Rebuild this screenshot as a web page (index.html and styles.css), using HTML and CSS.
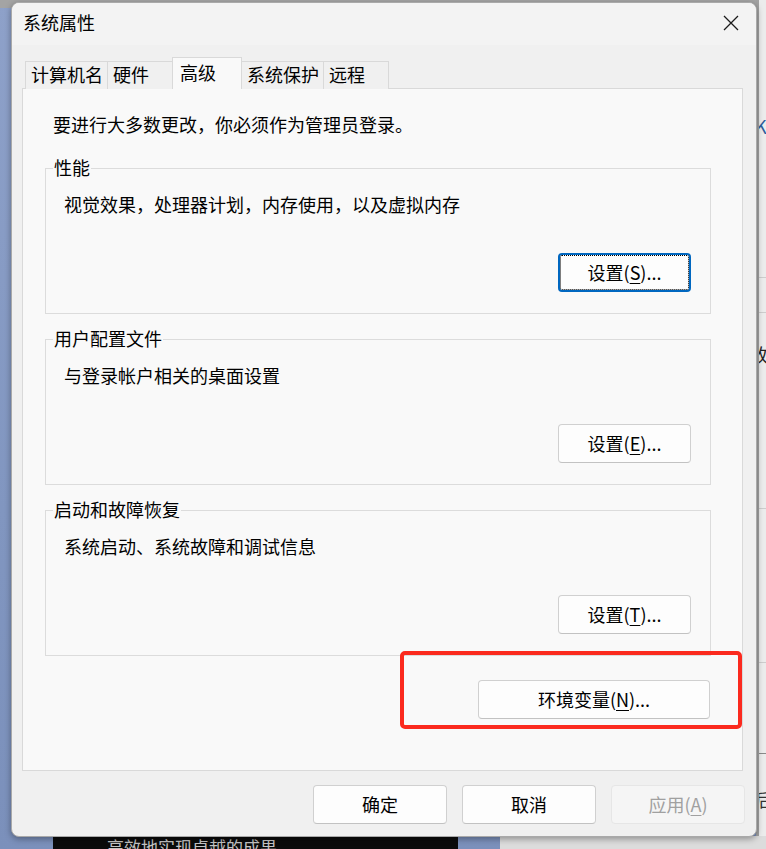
FILE: index.html
```html
<!DOCTYPE html>
<html lang="zh-CN">
<head>
<meta charset="utf-8">
<title>系统属性</title>
<link rel="stylesheet" href="styles.css">
</head>
<body>
<div class="desktop">
  <div class="bg-top"></div>
  <div class="bg-right">
    <span class="frag frag-k">K</span>
    <span class="frag frag-a">改</span>
    <span class="frag frag-b">后</span>
    <i class="hline l1"></i><i class="hline l2"></i><i class="hline l3"></i><i class="hline l4"></i><i class="hline l5"></i>
  </div>
  <div class="bg-bottom-black"><span>高效地实现卓越的成果。</span></div>
  <div class="bg-bottom-grey"></div>

  <div class="dialog">
    <div class="titlebar">
      <span class="title">系统属性</span>
      <span class="close">
        <svg width="16" height="16" viewBox="0 0 16 16"><path d="M1 1 L15 15 M15 1 L1 15" stroke="#1b1b1b" stroke-width="1.3" fill="none"/></svg>
      </span>
    </div>
    <div class="dlg-body">
      <div class="tabs">
        <div class="tab">计算机名</div>
        <div class="tab">硬件</div>
        <div class="tab active">高级</div>
        <div class="tab">系统保护</div>
        <div class="tab">远程</div>
      </div>
      <div class="panel">
        <p class="intro">要进行大多数更改，你必须作为管理员登录。</p>
        <div class="group">
          <div class="group-title">性能</div>
          <p class="group-desc">视觉效果，处理器计划，内存使用，以及虚拟内存</p>
          <div class="group-actions"><button class="btn btn-set focused">设置(<u>S</u>)...</button></div>
        </div>
        <div class="group">
          <div class="group-title">用户配置文件</div>
          <p class="group-desc">与登录帐户相关的桌面设置</p>
          <div class="group-actions"><button class="btn btn-set">设置(<u>E</u>)...</button></div>
        </div>
        <div class="group">
          <div class="group-title">启动和故障恢复</div>
          <p class="group-desc">系统启动、系统故障和调试信息</p>
          <div class="group-actions"><button class="btn btn-set">设置(<u>T</u>)...</button></div>
        </div>
        <div class="env-row"><button class="btn btn-env">环境变量(<u>N</u>)...</button></div>
      </div>
      <div class="actions">
        <button class="btn btn-dlg">确定</button>
        <button class="btn btn-dlg">取消</button>
        <button class="btn btn-dlg disabled">应用(<u>A</u>)</button>
      </div>
    </div>
  </div>

  <div class="annot"></div>
</div>
</body>
</html>
```

FILE: styles.css
```css
* { box-sizing: border-box; }
html, body { margin: 0; padding: 0; }
body {
  font-family: "Noto Sans CJK SC", "Microsoft YaHei", sans-serif;
  font-size: 18px;
  color: #000;
}
.desktop {
  position: relative;
  width: 766px;
  height: 849px;
  overflow: hidden;
  background: linear-gradient(180deg, #8ea1c9 0%, #8196c0 60%, #7b90bb 100%);
}
.bg-top {
  position: absolute;
  left: 0; top: 0;
  width: 766px; height: 8px;
  background: #a4a4a4;
}
.bg-right {
  position: absolute;
  left: 756px; top: 0;
  width: 10px; height: 849px;
  background: #ececec;
  border-left: 3px solid #a2a2a2;
  overflow: hidden;
}
.frag {
  position: absolute;
  font-size: 18px;
  line-height: 24px;
  white-space: nowrap;
}
.frag-k { left: -4px; top: 114px; color: #2a5d9c; }
.frag-a { left: -9px; top: 342px; color: #222; }
.frag-b { left: -4px; top: 787px; color: #333; }
.hline {
  position: absolute;
  left: 0; width: 10px; height: 1px;
  background: #cdcdcd;
}
.l1 { top: 277px; } .l2 { top: 312px; } .l3 { top: 508px; } .l4 { top: 662px; }
.l5 { top: 753px; background: #8a8a8a; }
.bg-bottom-black {
  position: absolute;
  left: 53px; top: 836px;
  width: 405px; height: 13px;
  background: #0b0b0b;
  overflow: hidden;
}
.bg-bottom-black span {
  display: block;
  margin: -1px 0 0 54px;
  font-size: 17px;
  line-height: 24px;
  color: #c4c4c4;
}
.bg-bottom-grey {
  position: absolute;
  left: 500px; top: 836px;
  width: 266px; height: 13px;
  background: #dcdcdc;
}

.dialog {
  position: absolute;
  left: 11px; top: 2px;
  width: 746px; height: 835px;
  border: 1px solid #a9a9a9;
  border-radius: 8px;
  background: #f0f0f0;
  box-shadow: 0 2px 6px rgba(0,0,0,0.35);
  overflow: hidden;
  display: flex;
  flex-direction: column;
}
.titlebar {
  height: 42px;
  flex: none;
  background: #f3f3f3;
  display: flex;
  justify-content: space-between;
  align-items: flex-start;
}
.title {
  padding: 7px 0 0 11px;
  line-height: 24px;
}
.close {
  width: 50px;
  height: 42px;
  display: flex;
  align-items: center;
  justify-content: center;
  padding-bottom: 3px;
}
.close svg { display: block; }

.dlg-body {
  flex: 1;
  padding: 12px 11px 0 10px;
  display: flex;
  flex-direction: column;
}
.tabs {
  display: flex;
  align-items: flex-end;
  height: 32px;
  margin-left: 3px;
  position: relative;
  z-index: 1;
}
.tab {
  height: 28px;
  min-width: 66px;
  padding: 0 4px 0 5px;
  margin-right: -1px;
  line-height: 24px;
  border: 1px solid #d9d9d9;
  border-bottom: none;
  background: #f0f0f0;
  white-space: nowrap;
}
.tab.active {
  height: 32px;
  min-width: 70px;
  padding: 2px 4px 0 7px;
  background: #f9f9f9;
  position: relative;
  z-index: 2;
}
.panel {
  margin-top: -1px;
  margin-right: 2px;
  height: 683px;
  border: 1px solid #d9d9d9;
  background: #f9f9f9;
  padding-top: 23px;
}
.intro {
  margin: 0 0 0 30px;
  line-height: 24px;
}
.group {
  margin: 32px 0 0 22px;
  width: 666px;
  border: 1px solid #dcdcdc;
  padding: 0 19px 21px 18px;
}
.group + .group { margin-top: 25px; }
.group-title {
  width: fit-content;
  margin: -14px 0 0 -11px;
  padding: 0 1px;
  line-height: 24px;
  background: #f9f9f9;
}
.group-desc {
  margin: 13px 0 0 0;
  line-height: 24px;
}
.group-actions {
  margin-top: 37px;
  display: flex;
  justify-content: flex-end;
}
.btn {
  font-family: inherit;
  font-size: 18px;
  color: #000;
  line-height: 24px;
  height: 39px;
  padding: 0 0 1px;
  background: #fdfdfd;
  border: 1px solid #d0d0d0;
  border-bottom-color: #c2c2c2;
  border-radius: 4px;
  text-align: center;
  position: relative;
}
.btn u { text-underline-offset: 3px; text-decoration-thickness: 1px; }
.btn-set { width: 133px; }
.btn.focused {
  border: 2px solid #0067c0;
}
.btn.focused::after {
  content: "";
  position: absolute;
  inset: 0;
  border: 1px dotted #000;
  border-radius: 2px;
}
.env-row {
  margin: 24px 0 0 22px;
  width: 666px;
  padding-right: 1px;
  display: flex;
  justify-content: flex-end;
}
.btn-env { width: 232px; }
.actions {
  margin-top: 14px;
  display: flex;
  justify-content: flex-end;
  gap: 15px;
}
.btn-dlg { width: 134px; }
.btn.disabled {
  background: #f5f5f5;
  border-color: #e6e6e6;
  color: #a0a0a0;
}

.annot {
  position: absolute;
  left: 400px; top: 651px;
  width: 342px; height: 78px;
  border: 4px solid #fb2a1e;
  border-radius: 5px;
}
```
